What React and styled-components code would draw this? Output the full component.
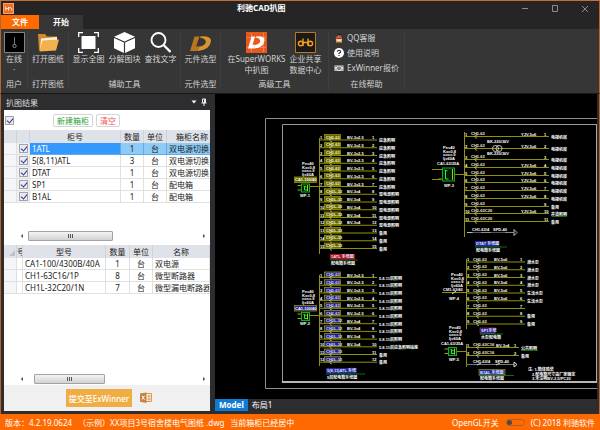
import React from 'react'
import styled, { createGlobalStyle } from 'styled-components'

const ribbonGroups = [
  { title: '用户', width: 27, items: [{ icon: 'user', lines: ['在线', '·'] }] },
  { title: '打开图纸', width: 41, items: [{ icon: 'folder', lines: ['打开图纸'] }] },
  {
    title: '辅助工具',
    width: 112,
    items: [
      { icon: 'fit', lines: ['显示全图'] },
      { icon: 'cube', lines: ['分解图块'] },
      { icon: 'search', lines: ['查找文字'] },
    ],
  },
  { title: '元件选型', width: 40, items: [{ icon: 'part', lines: ['元件选型'] }] },
  {
    title: '高级工具',
    width: 108,
    items: [
      { icon: 'works', lines: ['在SuperWORKS', '中扒图'] },
      { icon: 'data', lines: ['企业共享', '数据中心'] },
    ],
  },
]

const cabinets = [
  ['1ATL', 1, '双电源切换'],
  ['5(8,11)ATL', 3, '双电源切换'],
  ['DTAT', 1, '双电源切换'],
  ['SP1', 1, '配电箱'],
  ['B1AL', 1, '配电箱'],
]

const parts = [
  ['CA1-100/4300B/40A', 1, '双电源'],
  ['CH1-63C16/1P', 8, '微型断路器'],
  ['CH1L-32C20/1N', 7, '微型漏电断路器'],
]

export default function App() {
  return (
    <>
      <GlobalStyle />
      <Window>
        <TitleBar>
          <AppMark viewBox="0 0 10 10" aria-hidden="true">
            <rect width="10" height="10" fill="#f6a36a" />
            <rect x="1" y="1" width="8" height="8" fill="#ee6a1c" />
            <path d="M2.500 3v4M2.500 5h2M5 3.500v3.500M5 4.500q3-1 3 1v1.500" stroke="#ffe6d0" strokeWidth=".9" fill="none" />
          </AppMark>
          <h1>利驰CAD扒图</h1>
          <WindowButtons>
            <button type="button" aria-label="最小化">
              <svg width="8" height="8" viewBox="0 0 8 8"><path d="M1 3.500h6" /></svg>
            </button>
            <button type="button" aria-label="最大化">
              <svg width="8" height="8" viewBox="0 0 8 8"><path d="M1.500 .5h5v6h-5z" /></svg>
            </button>
            <button type="button" aria-label="关闭">
              <svg width="8" height="8" viewBox="0 0 8 8"><path d="M1 1l6 6M7 1l-6 6" /></svg>
            </button>
          </WindowButtons>
        </TitleBar>

        <TabRow>
          <RibbonTab $width={38} $background="#ff6a00">文件</RibbonTab>
          <RibbonTab $width={44} $background="#363636">开始</RibbonTab>
        </TabRow>

        <Ribbon>
          {ribbonGroups.map((group) => (
            <Group key={group.title} $width={group.width}>
              <GroupItems>
                {group.items.map((item) => (
                  <RibbonButton key={item.icon} type="button">
                    <RibbonIcon name={item.icon} />
                    {item.lines.map((line) => <span key={line}>{line}</span>)}
                  </RibbonButton>
                ))}
              </GroupItems>
              <GroupTitle>{group.title}</GroupTitle>
            </Group>
          ))}
          <Group $width={76}>
            <HelpItems>
              <HelpLink href="#qq">
                <svg width="10" height="10" viewBox="0 0 10 10">
                  <ellipse cx="5" cy="6" rx="3" ry="3" fill="#eee" />
                  <path d="M3.500 3.500Q3.500 .5 5.500 .5T7 4z" fill="#241a18" />
                  <path d="M1.500 4.200h6.500v2H1.500z" fill="#d8281e" />
                  <path d="M4 2.500h3v1H4zM2 8h6v1.500H2z" fill="#f0a32a" />
                </svg>
                QQ客服
              </HelpLink>
              <HelpLink href="#help">
                <svg width="10" height="10" viewBox="0 0 10 10">
                  <circle cx="5" cy="5" r="5" fill="#fff" />
                  <path d="M3.400 3.800Q3.500 2.200 5 2.200T6.600 3.700Q6.500 4.700 5 5.300V6M5 7v1.100" stroke="#222" fill="none" strokeWidth="1.100" />
                </svg>
                使用说明
              </HelpLink>
              <HelpLink href="#price">
                <svg width="10" height="10" viewBox="0 0 10 10">
                  <path d="M.5 2.500h9v5.500h-9z" fill="#ddd" />
                  <circle cx="5" cy="5.200" r="1.800" fill="#555" />
                  <path d="M1.500 3.500h1M7.500 3.500h1M1.500 7h1M7.500 7h1" stroke="#444" />
                  <path d="M4.200 4.300L5 5.200l.8-.9M5 5v1.500" stroke="#ddd" fill="none" strokeWidth=".6" />
                </svg>
                ExWinner报价
              </HelpLink>
            </HelpItems>
            <GroupTitle>在线帮助</GroupTitle>
          </Group>
        </Ribbon>

        <Workspace>
          <Panel>
            <PanelHeader>
              <h2>扒图结果</h2>
              <button type="button" aria-label="菜单">
                <svg width="6" height="8" viewBox="0 0 6 8"><path d="M.5 2.500h5L3 5.500z" fill="#fff" /></svg>
              </button>
              <button type="button" aria-label="固定">
                <svg width="6" height="8" viewBox="0 0 6 8">
                  <path d="M1.500 1h3v3.500h-3zM.5 5h5M3 5v3" stroke="#eee" fill="none" />
                  <path d="M3.500 1v4" stroke="#eee" />
                </svg>
              </button>
            </PanelHeader>
            <PanelBody>
              <PanelTools>
                <Check type="checkbox" defaultChecked aria-label="全选" />
                <SmallButton $color="#2f9e35" $left={39}>新建箱柜</SmallButton>
                <SmallButton $color="#f0524f" $left={3}>清空</SmallButton>
              </PanelTools>

              <TableArea $height={115}>
                <DataTable $width="214px">
                  <colgroup>
                    <col width="13" /><col width="13" /><col width="91" /><col width="23" /><col width="23" /><col />
                  </colgroup>
                  <thead>
                    <tr><th /><th /><th>柜号</th><th>数量</th><th>单位</th><th>箱柜名称</th></tr>
                  </thead>
                  <tbody>
                    {cabinets.map(([name, count, kind], i) => (
                      <Row key={name} $selected={i === 0}>
                        <td />
                        <CheckCell><Check type="checkbox" defaultChecked aria-label={name} /></CheckCell>
                        <td>{name}</td>
                        <MidCell>{count}</MidCell>
                        <MidCell>台</MidCell>
                        <td>{kind}</td>
                      </Row>
                    ))}
                  </tbody>
                </DataTable>
                <ScrollBar $start={6} $width={85} />
              </TableArea>

              <TableArea>
                <DataTable $width="100%">
                  <colgroup>
                    <col width="13" /><col width="6" /><col width="83" /><col width="24" /><col width="23" /><col />
                  </colgroup>
                  <thead>
                    <tr>
                      <th><Corner viewBox="0 0 6 6"><path d="M6 0v6H0z" fill="#bfc3c9" /></Corner></th>
                      <th>号</th><th>型号</th><th>数量</th><th>单位</th><th>名称</th>
                    </tr>
                  </thead>
                  <tbody>
                    {parts.map(([model, count, name]) => (
                      <Row key={model}>
                        <td /><td />
                        <td>{model}</td>
                        <MidCell>{count}</MidCell>
                        <MidCell>台</MidCell>
                        <td>{name}</td>
                      </Row>
                    ))}
                  </tbody>
                </DataTable>
                <ScrollBar $start={12} $width={71} />
              </TableArea>

              <PanelFooter>
                <SubmitButton type="button">提交至ExWinner</SubmitButton>
                <ExportButton type="button" aria-label="导出Excel">
                  <svg width="12" height="12" viewBox="0 0 12 12">
                    <path d="M5.500 1.500h6v8h-6" fill="#fbf0e2" stroke="#d99a55" />
                    <path d="M8 3.500h2v1.500H8zM8 6.500h2V8H8z" fill="none" stroke="#d99a55" strokeWidth=".8" />
                    <path d="M0 1.500L6.500 .5v10.500L0 9.800z" fill="#c98240" />
                    <path d="M2 3.800l2.500 3.800M4.500 3.800L2 7.600" stroke="#fff" />
                  </svg>
                </ExportButton>
              </PanelFooter>
            </PanelBody>
          </Panel>

          <Viewer>
            <Canvas><CadDrawing /></Canvas>
            <LayoutTabs>
              <LayoutTab $active>Model</LayoutTab>
              <LayoutTab>布局1</LayoutTab>
            </LayoutTabs>
          </Viewer>
        </Workspace>

        <StatusBar>
          <span>版本：4.2.19.0624</span>
          <span>（示例）XX项目3号宿舍楼电气图纸 .dwg</span>
          <span>当前箱柜已经居中</span>
          <SwitchLabel>
            OpenGL开关
            <Switch type="checkbox" />
          </SwitchLabel>
          <span>(C) 2018 利驰软件</span>
        </StatusBar>
      </Window>
    </>
  )
}

function RibbonIcon({ name }) {
  return (
    <svg width="21" height="21" viewBox="0 0 21 21" aria-hidden="true">
      {name === 'user' && (
        <>
          <path d="M.5 .5h20v20H.5z" fill="#000" stroke="#858585" />
          <path d="M10.500 5v8" stroke="#777" />
          <circle cx="10.500" cy="14" r="1.700" fill="none" stroke="#888" />
        </>
      )}
      {name === 'folder' && (
        <>
          <path d="M0 2h7l2 2.500h10V9H3v9.500H1z" fill="#d18a2c" />
          <path d="M3 6.500L19 5v4H5L2 18z" fill="#fff3dd" />
          <path d="M4.500 8.500L21 7.500l-3 11-16.500 1z" fill="#f2b14c" />
        </>
      )}
      {name === 'fit' && (
        <>
          <path d="M3.500 4h14v13h-14z" fill="#fff" />
          <path d="M0.700 5V.7H5M16 .7h4.300V5M20.300 16v4.300H16M5 20.300H.7V16" fill="none" stroke="#fff" strokeWidth="1.300" />
        </>
      )}
      {name === 'cube' && (
        <>
          <path d="M10.500 0L21 4.700 10.500 9.400 0 4.700z" fill="#fff" />
          <path d="M0 6l9.900 4.500V21L0 16.300zM21 6l-9.900 4.500V21L21 16.300z" fill="#fff" />
        </>
      )}
      {name === 'search' && (
        <g fill="none" stroke="#fff">
          <circle cx="8.500" cy="8" r="7" strokeWidth="1.900" />
          <path d="M13.500 13l7 7" strokeWidth="2.300" />
        </g>
      )}
      {name === 'part' && (
        <>
          <path d="M4.500 4.500h5L6 14.500l3-.5L7.500 19H0z" fill="#b9761f" />
          <path d="M10 4.500Q21 3.500 21 9 20 18 7.500 19L9 14.800Q15.500 13.500 15.800 10 16 6.500 10 5.500z" fill="#d9942f" />
        </>
      )}
      {name === 'works' && (
        <>
          <path d="M0 0h21v21H0z" fill="#e9571d" />
          <path d="M1 5.500h19M1 15.500h19M5.500 1v19M17.500 1v19" stroke="#f79a66" strokeWidth=".7" />
          <path d="M5.500 4.500H9L6.500 13l2.500-.5L7.500 16.500H2z" fill="#fff" />
          <path d="M10 4.500Q19 3.500 18.500 8.500 17.500 16 7.500 16.500L9 13Q14 12 14.200 9 14 6 10 5.500z" fill="#fff" />
        </>
      )}
      {name === 'data' && (
        <>
          <path d="M.5 .5h20v20H.5z" fill="#1c1a18" stroke="#b97a1c" />
          <g fill="none" stroke="#f0a01e" strokeWidth="1.400">
            <circle cx="5.700" cy="11.500" r="2.300" />
            <path d="M8 6.500v7.500M13 6.500v7.500M8 10.500h5" />
            <circle cx="15.300" cy="11.500" r="2.300" />
          </g>
        </>
      )}
    </svg>
  )
}

function ScrollBar({ $start, $width }) {
  return (
    <ScrollTrack>
      <svg width="4" height="6" viewBox="0 0 4 6"><path d="M3 1v4L.8 3z" fill="#555" /></svg>
      <ScrollThumb $start={$start} $width={$width}><i /><i /><i /></ScrollThumb>
      <svg width="4" height="6" viewBox="0 0 4 6"><path d="M1 1v4l2.200-2z" fill="#555" /></svg>
    </ScrollTrack>
  )
}

// ---- CAD drawing, 382 x 305 units ----

const steps = (start, step, n) => Array.from({ length: n }, (_, i) => start + step * i)

function Label({ x, y, fill = '#fff', children }) {
  return <text x={x} y={y} fill={fill}>{children}</text>
}

function Caption({ x, y, width, title, text, fill = '#26269c', stroke, tail = 8 }) {
  return (
    <>
      <rect x={x} y={y} width={width} height="5.500" fill={fill} stroke={stroke} strokeWidth=".7" />
      <Label x={x + 1} y={y + 4.300} fill="#dfe0ff">{title}</Label>
      <path d={`M${x} ${y + 6}h${width + tail}`} stroke="#0b8a1a" strokeWidth=".8" />
      <Label x={x + 1} y={y + 10.500}>{text}</Label>
    </>
  )
}

function Stack({ x, y }) {
  return ['Pe=40', 'Kx=0.8', 'cos=.9', 'Ij=60A'].map((line, i) => (
    <Label key={line} x={x} y={y + i * 3.500}>{line}</Label>
  ))
}

function Source({ x, y, width = 8, height = 8 }) {
  return (
    <>
      <path d={`M${x - 4} ${y + 1.500}h5M${x - 4} ${y + height - 2}h5`} stroke="#a6a600" />
      <rect x={x} y={y} width={width} height={height} fill="#001c00" stroke="#00b428" />
      <path d={`M${x + 2} ${y + 2}l3 1M${x + 3} ${y + 2}v${height - 4}h3`} stroke="#39e05a" fill="none" />
      <path d={`M${x + width - 2} ${y + 1}v${height - 2}`} stroke="#b9c800" />
    </>
  )
}

function Feeder({ x, y, end, index, boxed, blue, code, cable, cableX, use }) {
  return (
    <>
      <path d={`M${x} ${y}H${end}`} stroke="#929200" />
      <Label x={x + 1} y={y - 1}>{index}</Label>
      {boxed && (
        <rect x={x + 5.500} y={y - 5.500} width="16" height="5" fill={blue ? '#22228e' : '#626208'} stroke="#929200" strokeWidth=".8" />
      )}
      <Label x={x + 7} y={y - 1.300} fill={blue ? '#d5d5ff' : '#f4f4d8'}>{code}</Label>
      <path d={`M${x + 10} ${y}l4-2M${x + 11} ${y + 1}l2 .8`} stroke="#ddd" strokeWidth=".7" />
      {cable && <Label x={cableX} y={y - 1}>{cable}</Label>}
      <Label x={end - 5} y={y - 1}>{index}</Label>
      {use && <Label x={end + 2} y={y + 2}>{use}</Label>}
    </>
  )
}

function CadDrawing() {
  const rowsA = steps(46, 7.75, 15)
  const rowsB = steps(183.5, 7.7, 12)
  const rowsC = [42.5, 54.5, 65.5, 73.5, 81.5, 88.5, 96.5, 104.5, 112.5, 119.5, 127.5]
  const rowsD = steps(168, 7.75, 9)
  return (
    <Drawing viewBox="0 0 382 305" role="img" aria-label="电气系统图">
      <path d="M382 24.500H50.500v270H382" stroke="#8f8f8f" fill="none" />
      <path d="M381.500 30.500H67.500v257" stroke="#999" fill="none" />
      <path d="M67 288h315" stroke="#f4f4f4" strokeWidth="1.400" />
      <path d="M381.500 30v258" stroke="#aaa" />

      <path d="M104.500 44v116M104.500 181v91M249.500 38v105M251.500 165v70M251.500 250v23" stroke="#929200" />

      {/* 1ATL */}
      {rowsA.map((y, i) => (
        <Feeder key={y} x={104} y={y} end={162} index={i + 1} boxed
          code={i < 7 ? 'CH1-63' : 'CH1L-32'} cableX={132}
          cable={i < 7 ? 'BV-3x2.5' : i < 12 && 'BV-3x4'}
          use={i < 7 ? '应急照明' : i < 12 ? '双电源照明' : '备用'} />
      ))}
      <Stack x={87} y={71} />
      <rect x="79.500" y="83" width="22" height="5.500" fill="#626208" stroke="#929200" strokeWidth=".8" />
      <Label x={80} y={87.300}>CA1-100/40</Label>
      <Source x={86.500} y={90} />
      <path d="M94 92.500h10" stroke="#929200" />
      <Label x={85} y={103}>WP-1</Label>
      <Caption x={115} y={160} width={25} title="1ATL 系统图" text="配电箱系统图" fill="#b0101c" tail={3} />

      {/* 5(8,11)ATL */}
      {rowsB.map((y, i) => (
        <Feeder key={y} x={104} y={y} end={162} index={i + 1} boxed blue
          code={i < 6 ? 'CH1-63' : 'CH1L-32'} cableX={132}
          cable={i < 6 ? 'BV-3x2.5' : i < 10 && 'BV-3x4'}
          use={i < 9 ? '5.8.11层照明' : i < 10 ? '5.8.11层应急照明插座' : '备用'} />
      ))}
      <Stack x={87} y={199} />
      <rect x="79.500" y="211.500" width="22" height="5.500" fill="#22228e" stroke="#929200" strokeWidth=".8" />
      <Label x={80} y={215.800}>CA1-100/40</Label>
      <Source x={86.500} y={218.500} />
      <path d="M94 221.500h10" stroke="#929200" />
      <Label x={85} y={231}>WP-2</Label>
      <Caption x={111} y={274} width={31} title="5(8,11)ATL 系统" text="5层配电箱系统图" />

      {/* DTAT */}
      {rowsC.map((y, i) => (
        <Feeder key={y} x={249} y={y} end={334} index={i + 1}
          code={i < 9 ? 'CH1-63' : 'CH1-63C20'} cableX={306}
          cable={![2, 8, 10].includes(i) && 'YJV-5x6'}
          use={i < 8 ? '电梯机房' : i < 9 ? '备用' : i < 10 ? '井道照明' : '备用'} />
      ))}
      <g stroke="#e8e8e8" fill="none" strokeWidth=".8">
        <circle cx="280.500" cy="54.500" r="3" />
        <circle cx="284" cy="54.500" r="3" />
        <path d="M252 138.500h6M266 138.500h10M290 138.500h9M299 135.500v6l3-3z" />
      </g>
      <path d="M257 138.500h42" stroke="#777" strokeWidth=".7" />
      <Label x={272} y={49}>BK-220/36V</Label>
      <Label x={272} y={60.500}>BK-220/36V</Label>
      <Label x={257} y={136.500}>CH1-63/4</Label>
      <Label x={278} y={136.500}>SPD-40</Label>
      <Stack x={228} y={55} />
      <Label x={222} y={71}>CA1-63/25A</Label>
      <Source x={227.500} y={74} width={12} height={13} />
      <path d="M217 75.500h9M217 85.500h9M240 80.500h9" stroke="#929200" />
      <Label x={229} y={93}>WP-3</Label>
      <Caption x={260} y={147} width={24} title="DTAT 系统图" text="配电箱系统图" />
      <path d="M337 122.500h15" stroke="#0b8a1a" strokeWidth=".8" />

      {/* SP1 */}
      {rowsD.map((y, i) => (
        <Feeder key={y} x={251} y={y} end={310} index={i + 1}
          code="CH1-63" cableX={279} cable={i < 6 && 'BV-5x6'}
          use={i < 4 ? '潜水泵' : i < 6 ? '生活水泵' : i > 6 && '备用'} />
      ))}
      <Stack x={236} y={182} />
      <Label x={228} y={197}>CM1-63/40</Label>
      <path d="M227 198.500h24" stroke="#929200" />
      <path d="M237 200l4-3" stroke="#ddd" />
      <Label x={234} y={206}>WP-4</Label>
      <Caption x={265} y={234} width={15} title="SP1系统" text="水泵配电箱" stroke="#a02040" />

      {/* B1AL */}
      {[253.5, 261.5].map((y, i) => (
        <Feeder key={y} x={251} y={y} end={304} index={i + 1}
          code="CH1-63C16" cableX={281} cable={i < 1 && 'BV-3x4'} use={i < 1 ? '公共照明' : '备用'} />
      ))}
      <path d="M251 270.500h48" stroke="#777" />
      <path d="M299 268v5l3-2.500zM262 271l4-2M281 271l4-2" stroke="#ddd" fill="none" />
      <Label x={258} y={268.500}>CH1-63/4</Label>
      <Label x={280} y={268.500}>SPD-40</Label>
      <Stack x={234} y={235} />
      <Label x={226} y={251}>CA1-63/25A</Label>
      <Source x={233.500} y={253.500} />
      <path d="M242 257.500h9" stroke="#929200" />
      <Label x={234} y={266.500}>WP-5</Label>
      <Caption x={264} y={275.500} width={26} title="B1AL 系统图" text="配电箱系统图" stroke="#929200" tail={9} />
      <path d="M306 256.500h17" stroke="#0b8a1a" strokeWidth=".8" />
      <Label x={313} y={277}>注: 1.箱体暗装</Label>
      <Label x={317} y={281.500}>2.配电箱尺寸由厂家确定</Label>
      <Label x={317} y={286}>3.未注明BV-2.5/PC20</Label>
    </Drawing>
  )
}

const GlobalStyle = createGlobalStyle`
  * { box-sizing: border-box; }
  body {
    margin: 0;
    font: 8px/11px "Noto Sans", "Noto Sans CJK SC", sans-serif;
  }
  h1, h2 { margin: 0; font-size: 8px; line-height: 11px; }
  button {
    margin: 0;
    padding: 0;
    border: 0;
    background: none;
    color: inherit;
    font: inherit;
  }
  svg { display: block; flex: none; }
`

const Window = styled.div`
  display: flex;
  flex-direction: column;
  min-height: 100vh;
  background: #2d2d30;
  border-top: 1px solid #c86c38;
`

const Sides = styled.div`
  border: solid #b8622f;
  border-width: 0 1px;
`

const TitleBar = styled(Sides)`
  display: grid;
  grid-template-columns: 236px auto 1fr;
  height: 14px;
  background: #252525;
  color: #fff;

  h1 { line-height: 14px; }
`

const AppMark = styled.svg`
  width: 11px;
  height: 11px;
  margin: 2px 0 0 2px;
`

const WindowButtons = styled.div`
  display: flex;
  justify-content: flex-end;
  gap: 22px;
  padding: 2px 10px 0 0;

  path { fill: none; stroke: #8c8c8c; }
`

const TabRow = styled(Sides)`
  display: flex;
  height: 14px;
  background: #252525;
`

const RibbonTab = styled.button`
  width: ${(p) => p.$width}px;
  background: ${(p) => p.$background};
  color: #fff;
  font-weight: bold;
  line-height: 14px;
`

const Ribbon = styled(Sides)`
  display: flex;
  padding: 3px 0;
  background: #363636;
  border-bottom: 1px solid #1c1717;
  color: #d2d2d2;
`

const Group = styled.section`
  display: flex;
  flex-direction: column;
  width: ${(p) => p.$width}px;
  border-right: 1px solid #3f3f3f;
`

const GroupItems = styled.div`
  display: flex;
  justify-content: center;
  gap: 4px;
  height: 45px;
`

const RibbonButton = styled.button`
  display: flex;
  flex-direction: column;
  align-items: center;
  white-space: nowrap;
`

const GroupTitle = styled.div`
  line-height: 13px;
  text-align: center;
`

const HelpItems = styled.div`
  display: flex;
  flex-direction: column;
  gap: 4px;
  height: 45px;
  padding-left: 5px;
`

const HelpLink = styled.a`
  display: flex;
  align-items: center;
  gap: 3px;
  color: inherit;
  text-decoration: none;
  white-space: nowrap;
`

const Workspace = styled(Sides)`
  display: grid;
  flex: 1;
  grid-template-columns: 206px 1fr;
  gap: 5px;
  padding: 0 2px 3px 3px;
`

const Panel = styled.aside`
  display: flex;
  flex-direction: column;
  min-width: 0;
`

const PanelHeader = styled.header`
  display: flex;
  align-items: center;
  gap: 4px;
  height: 16px;
  padding: 0 3px 0 2px;
  color: #ddd;

  h2 { flex: 1; font-weight: normal; }
`

const PanelBody = styled.div`
  display: flex;
  flex: 1;
  flex-direction: column;
  background: #fff;
`

const PanelTools = styled.div`
  display: flex;
  align-items: center;
  height: 20px;
  padding-left: 1px;
`

const SmallButton = styled.button.attrs({ type: 'button' })`
  margin-left: ${(p) => p.$left}px;
  padding: 0 3px;
  border: 1px solid #d4d4d4;
  border-radius: 2px;
  color: ${(p) => p.$color};
  line-height: 11px;
`

const Check = styled.input`
  position: relative;
  display: block;
  width: 9px;
  height: 9px;
  margin: 0;
  border: 1px solid #a2a3ab;
  background: #e9ebf2;
  appearance: none;

  &:checked::after {
    content: '';
    position: absolute;
    left: 2px;
    top: 0;
    width: 3px;
    height: 5px;
    border: solid #33348e;
    border-width: 0 1px 1px 0;
    transform: rotate(40deg);
  }
`

const TableArea = styled.div`
  display: flex;
  flex: ${(p) => (p.$height ? 'none' : 1)};
  flex-direction: column;
  justify-content: space-between;
  height: ${(p) => (p.$height ? `${p.$height}px` : 'auto')};
  padding-bottom: ${(p) => (p.$height ? 4 : 1)}px;
  overflow: hidden;
`

const DataTable = styled.table`
  width: ${(p) => p.$width};
  table-layout: fixed;
  border-collapse: separate;
  border-spacing: 0;
  color: #222;

  th {
    height: 13px;
    padding: 0;
    overflow: hidden;
    background: #dfe2e8;
    border-right: 1px solid #cfd2d8;
    font-weight: normal;
    white-space: nowrap;
  }

  td {
    height: 12px;
    padding: 0 0 0 2px;
    overflow: hidden;
    border: solid #e0e0e0;
    border-width: 0 1px 1px 0;
    line-height: 11px;
    white-space: nowrap;
  }

  td:first-child { background: #f5f5f7; }
`

const Row = styled.tr`
  td:nth-child(n + 3) {
    background: ${(p) => (p.$selected ? '#8ecbf7' : '#fff')};
    border-color: ${(p) => (p.$selected ? '#5daee8' : '#e0e0e0')};
  }

  && td:nth-child(3) {
    background: ${(p) => (p.$selected ? '#3399ff' : '#fff')};
    color: ${(p) => (p.$selected ? '#fff' : '#222')};
  }
`

const CheckCell = styled.td`
  background: #f0f0f2;
`

const MidCell = styled.td`
  && { padding: 0; }
  text-align: center;
`

const Corner = styled.svg`
  width: 6px;
  height: 6px;
  margin: 3px 0 0 5px;
`

const ScrollTrack = styled.div`
  display: flex;
  align-items: center;
  height: 10px;
  padding: 0 4px 0 16px;

  svg:last-child { margin-left: auto; }
`

const ScrollThumb = styled.div`
  display: flex;
  align-items: center;
  justify-content: center;
  gap: 1px;
  width: ${(p) => p.$width}px;
  height: 10px;
  margin-left: ${(p) => p.$start - 2}px;
  border: 1px solid #a3a3a3;
  border-radius: 1px;
  background: linear-gradient(#f4f4f4, #d2d2d2);

  i { width: 1px; height: 4px; background: #555; }
`

const PanelFooter = styled.footer`
  display: flex;
  align-items: center;
  gap: 8px;
  height: 26px;
  padding-left: 62px;
  background: #f0f0f0;
`

const SubmitButton = styled.button`
  width: 66px;
  height: 18px;
  background: #f0ad43;
  color: #fff;
  font-weight: 500;
  white-space: nowrap;
`

const ExportButton = styled.button`
  display: block;
`

const Viewer = styled.main`
  display: flex;
  flex-direction: column;
  min-width: 0;
`

const Canvas = styled.div`
  flex: 1;
  background: #000;
`

const Drawing = styled.svg`
  width: 100%;

  text { font: bold 4px "Liberation Sans", "Noto Sans CJK SC", sans-serif; }
`

const LayoutTabs = styled.nav`
  display: flex;
  height: 12px;
`

const LayoutTab = styled.button.attrs({ type: 'button' })`
  padding: 0 4px;
  background: ${(p) => (p.$active ? '#0e7ad3' : 'none')};
  color: #fff;
  font-weight: ${(p) => (p.$active ? 'bold' : 'normal')};
  line-height: 12px;
`

const StatusBar = styled.footer`
  display: flex;
  align-items: center;
  gap: 6px;
  height: 16px;
  padding: 0 5px;
  background: #ff6a00;
  color: #fff;
  white-space: nowrap;
`

const SwitchLabel = styled.label`
  display: flex;
  align-items: center;
  gap: 7px;
  margin-left: auto;
`

const Switch = styled.input`
  width: 19px;
  height: 7px;
  margin: 0;
  border: 1px solid #a5622b;
  border-radius: 4px;
  appearance: none;

  &::before {
    content: '';
    display: block;
    width: 5px;
    height: 5px;
    border-radius: 50%;
    background: #4d4a48;
  }
`
